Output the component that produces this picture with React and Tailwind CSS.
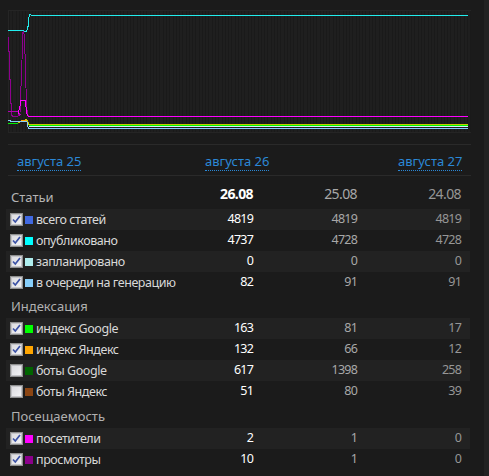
import React from "react";

const sections = [
  {
    title: "Статьи",
    rows: [
      { label: "всего статей", color: "bg-[#4169e1]", on: true, v: ["4819", "4819", "4819"] },
      { label: "опубликовано", color: "bg-[#00ffff]", on: true, v: ["4737", "4728", "4728"] },
      { label: "запланировано", color: "bg-[#afeeee]", on: true, v: ["0", "0", "0"] },
      { label: "в очереди на генерацию", color: "bg-[#87cefa]", on: true, v: ["82", "91", "91"] },
    ],
  },
  {
    title: "Индексация",
    h: "h-[25px]",
    rows: [
      { label: "индекс Google", color: "bg-[#00ff00]", on: true, v: ["163", "81", "17"] },
      { label: "индекс Яндекс", color: "bg-[#ffa500]", on: true, v: ["132", "66", "12"] },
      { label: "боты Google", color: "bg-[#006400]", on: false, v: ["617", "1398", "258"] },
      { label: "боты Яндекс", color: "bg-[#8b4513]", on: false, v: ["51", "80", "39"] },
    ],
  },
  {
    title: "Посещаемость",
    h: "h-[26px]",
    rows: [
      { label: "посетители", color: "bg-[#ff00ff]", on: true, v: ["2", "1", "0"] },
      { label: "просмотры", color: "bg-[#8b008b]", on: true, v: ["10", "1", "0"] },
    ],
  },
];

function Check({ on }) {
  return (
    <svg width="13" height="13" viewBox="0 0 13 13" className="shrink-0">
      <defs>
        <linearGradient id="cbg" x1="0" y1="0" x2="1" y2="1">
          <stop offset="0" stopColor="#d8d8dc" />
          <stop offset="1" stopColor="#f6f6f8" />
        </linearGradient>
      </defs>
      <rect x="0.5" y="0.5" width="12" height="12" fill="url(#cbg)" stroke="#8e8f8f" />
      <rect x="1.5" y="1.5" width="10" height="10" fill="none" stroke="#c4c4c8" />
      {on && (
        <path d="M3 6.5 L5.3 9 L10 3" fill="none" stroke="#3c52a6" strokeWidth="1.7" />
      )}
    </svg>
  );
}

function Chart() {
  const stripes = [];
  for (let i = 0; i < 142; i++) {
    const x = Math.round(1 + i * 3.27);
    stripes.push(<rect key={i} x={x} y="1" width="1" height="121" fill="#1a1a1a" />);
  }
  return (
    <svg width="463" height="123" viewBox="0 0 463 123" shapeRendering="crispEdges">
      <rect x="0.5" y="0.5" width="462" height="122" fill="#1f1f1f" stroke="#252525" />
      {stripes}
      {/* purple */}
      <polyline
        fill="none"
        stroke="#8e008e"
        strokeWidth="1"
        points="0.5,27 0.5,41 1.5,41 1.5,69 2.5,69 2.5,93 3.5,93 3.5,105 4.5,106 10,106 12,103 14,50 14.5,23 15.5,22 16.5,26 17.5,60 18.5,95 19.5,105 21,107"
      />
      {/* magenta */}
      <polyline fill="none" stroke="#b000b0" strokeWidth="1" points="0,101 10.5,101 11.5,105 12.5,104" />
      <polyline
        fill="none"
        stroke="#ff00ff"
        strokeWidth="1"
        points="10,104 12,96 13,90 14,90.5 15,90 16,90 17,90.5 18,97 19,104 20.5,106.5 460,106.5"
      />
      {/* bottom lines */}
      <polyline fill="none" stroke="#00ee00" strokeWidth="1" points="0,113.5 10,113.5" />
      <polyline fill="none" stroke="#c8c800" strokeWidth="1.5" points="10,112.5 13,111.5 18,110 19.5,111 20.5,114.5 460,114.5" />
      <polyline fill="none" stroke="#00ff00" strokeWidth="1.5" points="20.5,115.5 460,115.5" />
      <polyline fill="none" stroke="#ffa500" strokeWidth="1" points="13,110.5 18,110.5" />
      <polyline fill="none" stroke="#87cefa" strokeWidth="1" points="0,110.5 2,110.5 2.5,111.5 11,111.5 19,112 20,117 21,118.5 460,118.5" />
      <polyline fill="none" stroke="#d8eef8" strokeWidth="1" points="21,116.5 460,116.5" />
      {/* cyan */}
      <polyline
        fill="none"
        stroke="#22eeee"
        strokeWidth="1"
        points="0,20.5 15.5,20.5 16.5,21.5 18.5,21.5 19.5,19 20.5,14 20.5,9 21.5,5 22.5,4.5 23.5,5.5 460,5.5"
      />
    </svg>
  );
}

function DateLink({ children, w }) {
  return (
    <div className={w}>
      <span className="text-[13px] text-[#2b88d6] border-b border-dotted border-[#2b88d6] leading-[15px]">
        {children}
      </span>
    </div>
  );
}

export default function App() {
  return (
    <div
      className="w-[489px] h-[476px] bg-[#1b1b1b] flex overflow-hidden"
      style={{ fontFamily: '"Noto Sans", "Open Sans", sans-serif' }}
    >
      <div className="w-[484px] flex flex-col">
        <div className="pt-[10px] pl-[8px] flex">
          <Chart />
        </div>
        <div className="mt-[11px] ml-[8px] w-[463px] h-[32px] border-t border-b border-[#2a2a2a] flex items-center">
          <div className="pl-[9px] flex items-center">
            <DateLink w="w-[188px]">августа 25</DateLink>
            <DateLink w="w-[193px]">августа 26</DateLink>
            <DateLink w="w-[80px]">августа 27</DateLink>
          </div>
        </div>

        <div className="ml-[6px] w-[464px] flex flex-col">
          {sections.map((s, si) => (
            <div key={s.title} className="flex flex-col">
              {si === 0 ? (
                <div className="grid grid-cols-[1fr_104px_104px_104px] h-[33px] items-end">
                  <div className="pl-[5px] pb-[2px] text-[13px] text-[#b4b4b4]">{s.title}</div>
                  <div className="pr-[9px] pb-[5px] text-right text-[14px] font-bold text-white tracking-[-0.6px]">26.08</div>
                  <div className="pr-[9px] pb-[5px] text-right text-[14px] text-[#a8a8a8] tracking-[-0.6px]">25.08</div>
                  <div className="pr-[9px] pb-[5px] text-right text-[14px] text-[#969696] tracking-[-0.6px]">24.08</div>
                </div>
              ) : (
                <div className={`${s.h} flex items-end pl-[5px] pb-[2px] text-[13px] text-[#b0b0b0]`}>
                  {s.title}
                </div>
              )}
              {s.rows.map((r, ri) => (
                <div
                  key={r.label}
                  className={`grid grid-cols-[1fr_104px_104px_104px] h-[21px] items-center ${
                    ri % 2 === 0 ? "bg-[#222222]" : ""
                  }`}
                >
                  <div className="flex items-center pl-[4px] whitespace-nowrap min-w-0">
                    <Check on={r.on} />
                    <span className={`w-[8px] h-[8px] ml-[2px] shrink-0 ${r.color}`} />
                    <span className="ml-[3px] text-[12.5px] text-[#d8d8d8] leading-[16px] tracking-[-0.45px]">{r.label}</span>
                  </div>
                  <div className="pr-[9px] text-right text-[12.5px] text-white tracking-[-0.8px]">{r.v[0]}</div>
                  <div className="pr-[9px] text-right text-[12.5px] text-[#a8a8a8] tracking-[-0.8px]">{r.v[1]}</div>
                  <div className="pr-[9px] text-right text-[12.5px] text-[#969696] tracking-[-0.8px]">{r.v[2]}</div>
                </div>
              ))}
            </div>
          ))}
        </div>
      </div>
      <div className="w-[5px] bg-[#222222]" />
    </div>
  );
}
